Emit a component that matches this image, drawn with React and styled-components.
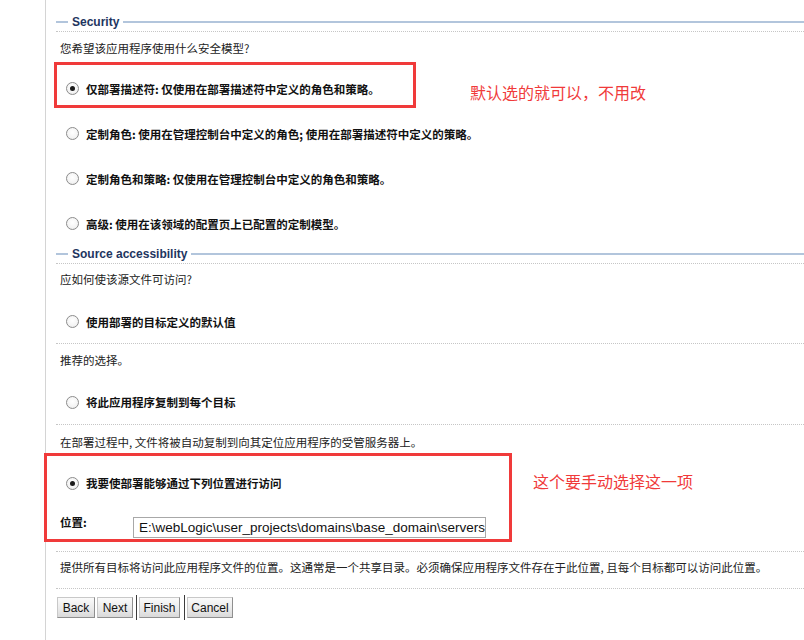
import React from "react";
import styled, { createGlobalStyle } from "styled-components";

const GlobalStyle = createGlobalStyle`
  html, body { margin: 0; padding: 0; background: #fff; }
  body { font-family: "Noto Sans CJK SC", "Noto Sans", sans-serif; color: #222; }
`;

const Page = styled.div`
  position: relative;
  width: 804px;
  height: 640px;
  overflow: hidden;
  padding-left: 45px;
  box-sizing: border-box;
`;

const Panel = styled.div`
  border-left: 1px solid #d4d4d4;
  height: 640px;
  box-sizing: border-box;
  padding: 14px 0 0 10px;
  display: flex;
  flex-direction: column;
`;

const Legend = styled.div`
  display: flex;
  align-items: center;
  gap: 4px;
  height: 17px;
  &::before,
  &::after {
    content: "";
    height: 2px;
    margin-bottom: 2px;
    background: #b2c5dc;
  }
  &::before { width: 12px; }
  &::after { flex: 1; }
`;

const LegendText = styled.span`
  font-family: "Liberation Sans", Arial, sans-serif;
  font-weight: bold;
  font-size: 12px;
  color: #1e3560;
  line-height: 17px;
`;

const Dotted = styled.div`
  height: 0;
  border-top: 1px dotted #c6c6c6;
  margin-top: ${(p) => p.$mt || 0}px;
`;

const Text = styled.div`
  height: 16px;
  line-height: 16px;
  padding-left: 4px;
  font-size: 11.5px;
  color: #222;
  white-space: nowrap;
  margin-top: ${(p) => p.$mt || 0}px;
`;

const RadioRow = styled.label`
  display: flex;
  align-items: center;
  gap: 7px;
  height: ${(p) => p.$h}px;
  margin-top: ${(p) => p.$mt || 0}px;
  padding-left: 10px;
  font-size: 11.5px;
  font-weight: bold;
  color: #111;
  white-space: nowrap;
`;

const Radio = styled.span`
  width: 13px;
  height: 13px;
  box-sizing: border-box;
  border-radius: 50%;
  border: 1px solid #8c8c8c;
  background: radial-gradient(circle at 50% 40%, #ffffff 0%, #f4f4f4 60%, #e2e2e2 100%);
  display: flex;
  align-items: center;
  justify-content: center;
  flex-shrink: 0;
  &::after {
    content: "";
    width: 5px;
    height: 5px;
    border-radius: 50%;
    background: ${(p) => (p.$checked ? "#1b1b1b" : "transparent")};
  }
`;

const FieldRow = styled.div`
  display: flex;
  align-items: flex-start;
  margin-top: ${(p) => p.$mt || 0}px;
  padding-left: 4px;
`;

const FieldLabel = styled.span`
  width: 73px;
  font-size: 11.5px;
  font-weight: bold;
  line-height: 16px;
  margin-top: -3px;
  color: #111;
`;

const TextInput = styled.input`
  width: 353px;
  height: 21px;
  box-sizing: border-box;
  border: 1px solid #a8a8a8;
  padding: 0 0 0 5px;
  font-family: "Liberation Sans", Arial, sans-serif;
  font-size: 13.5px;
  color: #111;
  background: #fff;
  outline: none;
`;

const ButtonBar = styled.div`
  display: flex;
  align-items: center;
  height: 25px;
  margin-top: 6px;
  padding-left: 1px;
`;

const Button = styled.button`
  width: ${(p) => p.$w}px;
  height: 21px;
  padding: 0;
  margin-right: ${(p) => p.$mr || 2}px;
  font-family: "Liberation Sans", Arial, sans-serif;
  font-size: 12px;
  color: #111;
  background: linear-gradient(#fafafa, #e9e9e9 60%, #d9d9d9);
  border: 1px solid;
  border-color: #c8c8c8 #8f8f8f #8f8f8f #c8c8c8;
  border-radius: 0;
  cursor: pointer;
`;

const Separator = styled.span`
  width: 1px;
  height: 25px;
  background: #3c3c3c;
  margin-right: 2px;
`;

const RedBox = styled.div`
  position: absolute;
  border: 3px solid #f03a3a;
  box-sizing: border-box;
  left: ${(p) => p.$x}px;
  top: ${(p) => p.$y}px;
  width: ${(p) => p.$w}px;
  height: ${(p) => p.$h}px;
  pointer-events: none;
`;

const Note = styled.div`
  position: absolute;
  left: ${(p) => p.$x}px;
  top: ${(p) => p.$y}px;
  font-size: 16px;
  line-height: 18px;
  color: #f03a3a;
  white-space: nowrap;
`;

export default function App() {
  return (
    <>
      <GlobalStyle />
      <Page>
        <Panel>
          <Legend>
            <LegendText>Security</LegendText>
          </Legend>
          <Dotted />
          <Text $mt={8}>您希望该应用程序使用什么安全模型?</Text>
          <RadioRow $h={45} $mt={10}>
            <Radio $checked />
            仅部署描述符: 仅使用在部署描述符中定义的角色和策略。
          </RadioRow>
          <RadioRow $h={45}>
            <Radio />
            定制角色: 使用在管理控制台中定义的角色; 使用在部署描述符中定义的策略。
          </RadioRow>
          <RadioRow $h={45}>
            <Radio />
            定制角色和策略: 仅使用在管理控制台中定义的角色和策略。
          </RadioRow>
          <RadioRow $h={45}>
            <Radio />
            高级: 使用在该领域的配置页上已配置的定制模型。
          </RadioRow>

          <Legend>
            <LegendText>Source accessibility</LegendText>
          </Legend>
          <Dotted />
          <Text $mt={7}>应如何使该源文件可访问?</Text>
          <RadioRow $h={43} $mt={13}>
            <Radio />
            使用部署的目标定义的默认值
          </RadioRow>
          <Dotted />
          <Text $mt={8}>推荐的选择。</Text>
          <RadioRow $h={44} $mt={12}>
            <Radio />
            将此应用程序复制到每个目标
          </RadioRow>
          <Dotted />
          <Text $mt={9}>在部署过程中, 文件将被自动复制到向其定位应用程序的受管服务器上。</Text>
          <RadioRow $h={26} $mt={20}>
            <Radio $checked />
            我要使部署能够通过下列位置进行访问
          </RadioRow>
          <FieldRow $mt={21}>
            <FieldLabel>位置:</FieldLabel>
            <TextInput
              readOnly
              value={"E:\\webLogic\\user_projects\\domains\\base_domain\\servers"}
            />
          </FieldRow>
          <Dotted $mt={13} />
          <Text $mt={7}>
            提供所有目标将访问此应用程序文件的位置。这通常是一个共享目录。必须确保应用程序文件存在于此位置, 且每个目标都可以访问此位置。
          </Text>
          <Dotted $mt={13} />
          <ButtonBar>
            <Button $w={38}>Back</Button>
            <Button $w={36} $mr={3}>Next</Button>
            <Separator />
            <Button $w={41} $mr={4}>Finish</Button>
            <Separator />
            <Button $w={46}>Cancel</Button>
          </ButtonBar>
        </Panel>

        <RedBox $x={54} $y={62} $w={362} $h={46} />
        <Note $x={470} $y={83}>默认选的就可以，不用改</Note>
        <RedBox $x={44} $y={453} $w={468} $h={89} />
        <Note $x={533} $y={472}>这个要手动选择这一项</Note>
      </Page>
    </>
  );
}
